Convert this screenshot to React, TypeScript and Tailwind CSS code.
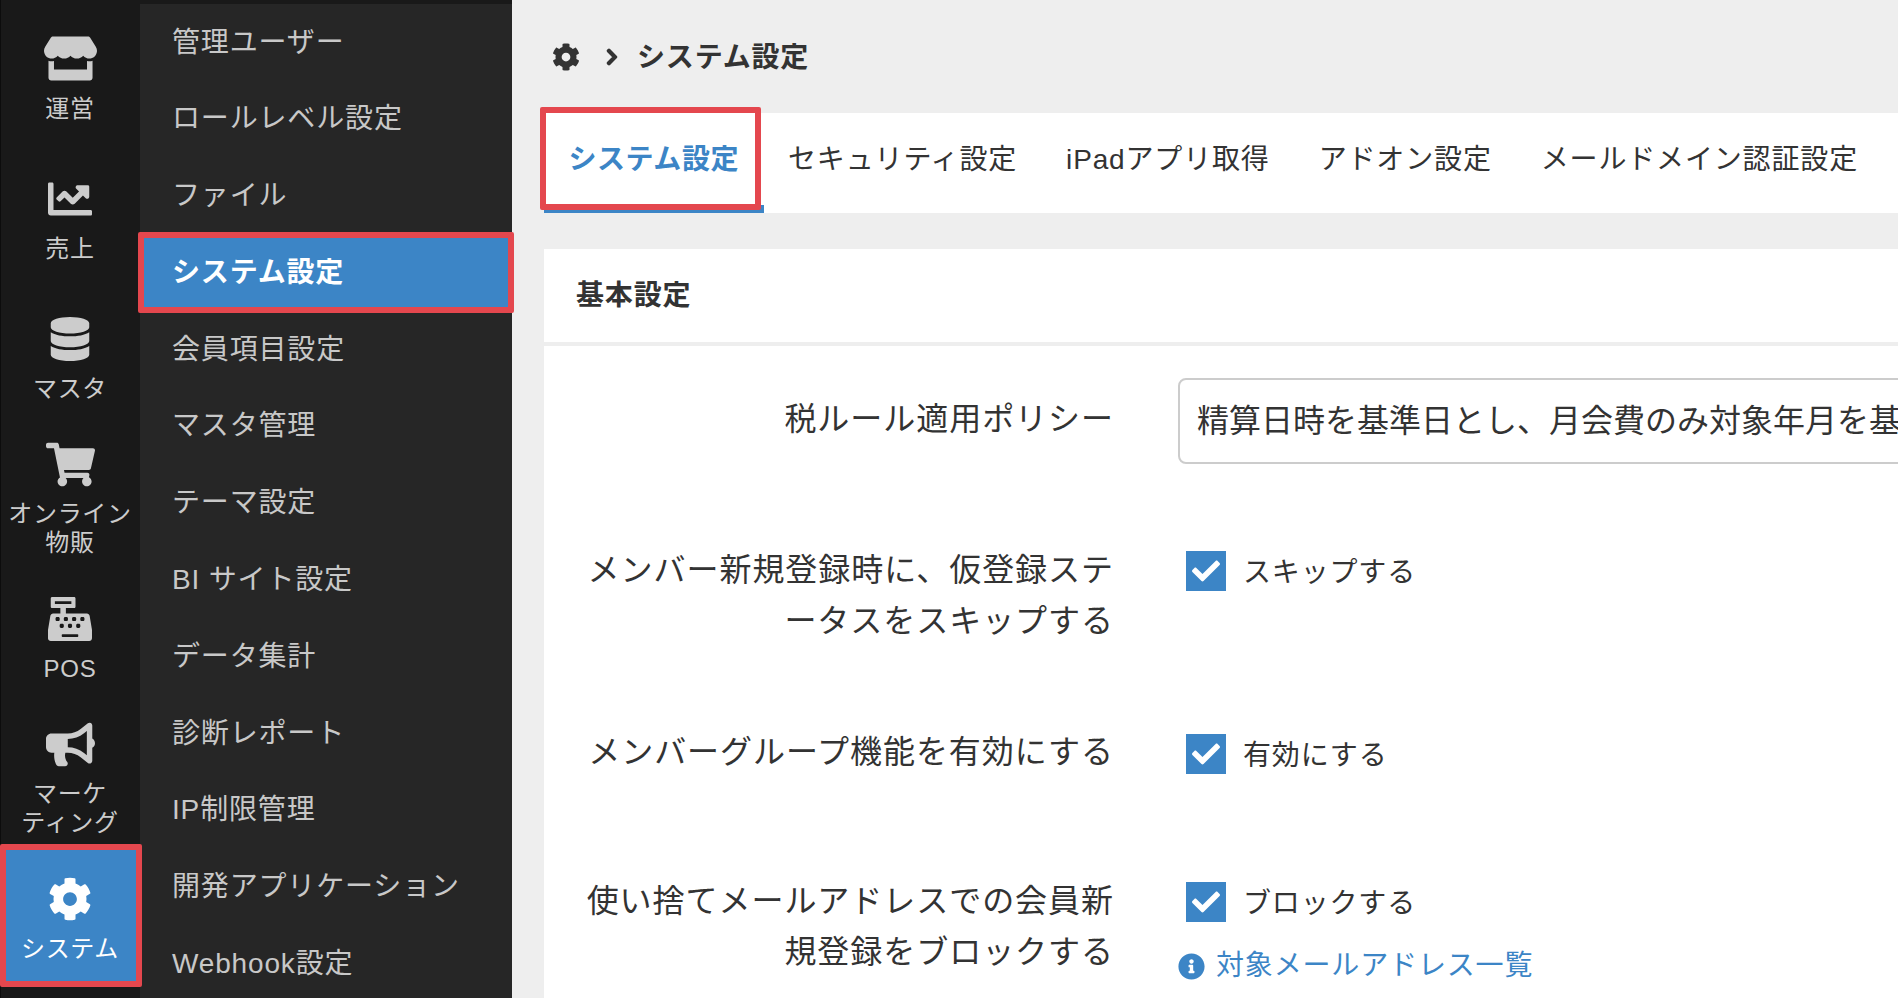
import type { ReactNode } from "react";
import {
  FaStore,
  FaChartLine,
  FaDatabase,
  FaShoppingCart,
  FaCashRegister,
  FaBullhorn,
  FaCog,
  FaCheck,
  FaInfoCircle,
  FaChevronRight,
} from "react-icons/fa";

const railItems = [
  { label: ["運営"], icon: <FaStore size={53} /> },
  { label: ["売上"], icon: <FaChartLine size={44} /> },
  { label: ["マスタ"], icon: <FaDatabase size={44} /> },
  { label: ["オンライン", "物販"], icon: <FaShoppingCart size={49} /> },
  { label: ["POS"], icon: <FaCashRegister size={44} /> },
  { label: ["マーケ", "ティング"], icon: <FaBullhorn size={49} /> },
  { label: ["システム"], icon: <FaCog size={44} />, active: true },
];

const subItems = [
  "管理ユーザー",
  "ロールレベル設定",
  "ファイル",
  "システム設定",
  "会員項目設定",
  "マスタ管理",
  "テーマ設定",
  "BI サイト設定",
  "データ集計",
  "診断レポート",
  "IP制限管理",
  "開発アプリケーション",
  "Webhook設定",
];

const tabs = ["システム設定", "セキュリティ設定", "iPadアプリ取得", "アドオン設定", "メールドメイン認証設定"];

const Checkbox = ({ label }: { label: string }) => (
  <div className="flex items-center h-10 ml-2">
    <span className="flex items-center justify-center w-10 h-10 bg-[#3c85c6] text-white">
      <FaCheck size={28} />
    </span>
    <span className="ml-[17px] pt-1 text-[28px] leading-10 tracking-[0.03em] text-[#333]">{label}</span>
  </div>
);

const FormRow = ({ label, children, className }: { label: ReactNode; children: ReactNode; className: string }) => (
  <div className={`flex ${className}`}>
    <div className="w-[538px] shrink-0 ml-8 pt-px text-right text-[32px] leading-[51px] tracking-[0.03em] text-[#333]">{label}</div>
    <div className="ml-16 shrink-0">{children}</div>
  </div>
);

export default function App() {
  return (
    <div className="flex h-screen w-full overflow-hidden bg-[#eeeeee] [font-family:'Liberation_Sans','Noto_Sans_CJK_JP',sans-serif]">
      {/* アイコンレール */}
      <nav className="w-[140px] shrink-0 pt-[9.5px] bg-[#191919] border-l border-[#0c0c0c]">
        {railItems.map((item) => (
          <div key={item.label[0]} className="relative flex flex-col items-center justify-center h-[140px] -ml-px">
            {item.active && (
              <div className="absolute left-0 top-[-5.5px] w-[142px] h-[143px] rounded-[2px] border-[6px] border-[#e4474e] bg-[#3c85c6]" />
            )}
            <div className={`relative flex items-center justify-center h-11 ${item.active ? "text-white" : "text-[#cccccc]"}`}>
              {item.icon}
            </div>
            <div className={`relative mt-[13px] text-center text-2xl leading-[29px] tracking-[0.03em] ${item.active ? "text-white" : "text-[#cccccc]"}`}>
              {item.label.map((line) => (
                <div key={line} className="whitespace-nowrap">
                  {line}
                </div>
              ))}
            </div>
          </div>
        ))}
      </nav>

      {/* サブメニュー */}
      <aside className="w-[372px] shrink-0 bg-[#262626] border-t-4 border-[#191919]">
        <div className="-mt-[2.4px]">
          {subItems.map((name) => {
            const active = name === "システム設定";
            return (
              <div
                key={name}
                className={`relative flex items-center h-[76.8px] pl-8 pt-[5px] text-[28px] tracking-[0.03em] ${
                  active ? "bg-[#3c85c6] font-bold text-white" : "text-[#c8c8c8]"
                }`}
              >
                {active && (
                  <div className="absolute left-[-2px] top-0 w-[376px] h-[81px] rounded-[2px] border-[6px] border-[#e4474e] z-10" />
                )}
                <span className="relative">{name}</span>
              </div>
            );
          })}
        </div>
      </aside>

      {/* メイン */}
      <main className="flex-1 min-w-0 overflow-hidden">
        <div className="flex items-center h-[113px] pl-10 text-[#333]">
          <FaCog size={28} />
          <FaChevronRight size={18} stroke="currentColor" strokeWidth={40} className="ml-[23px]" />
          <span className="ml-4 pt-[3px] text-[28px] font-bold tracking-[0.03em]">システム設定</span>
        </div>

        <div className="flex h-[100px] ml-8 bg-white">
          {tabs.map((tab, i) => (
            <div
              key={tab}
              className={`relative flex items-center h-full px-[24.5px] pb-[6px] text-[28px] ${
                i === 0
                  ? "font-bold tracking-[0.02em] text-[#3c85c6] border-b-8 border-[#3c85c6] box-border"
                  : "tracking-[0.03em] text-[#333]"
              }`}
            >
              {i === 0 && (
                <div className="absolute left-[-4px] top-[-6px] w-[221px] h-[103px] rounded-[2px] border-[6px] border-[#e4474e]" />
              )}
              <span className={i === 0 ? "mt-2" : ""}>{tab}</span>
            </div>
          ))}
        </div>

        <section className="ml-8 mt-9">
          <div className="flex items-center h-[93px] pl-8 bg-white text-[28px] font-bold tracking-[0.03em] text-[#333]">基本設定</div>
          <div className="mt-1 h-[700px] pt-8 bg-white">
            <FormRow
              className="mb-20"
              label={<div className="pt-[15px]">税ルール適用ポリシー</div>}
            >
              <div className="flex items-center w-[1000px] h-[86px] pl-[17px] rounded-lg border-2 border-[#cccccc] text-[32px] text-[#333] whitespace-nowrap">
                精算日時を基準日とし、月会費のみ対象年月を基準日とする
              </div>
            </FormRow>

            <FormRow
              className="mb-[79px]"
              label={
                <>
                  メンバー新規登録時に、仮登録ステ
                  <br />
                  ータスをスキップする
                </>
              }
            >
              <div className="pt-[7px]">
                <Checkbox label="スキップする" />
              </div>
            </FormRow>

            <FormRow className="mb-[97px]" label="メンバーグループ機能を有効にする">
              <div className="pt-2">
                <Checkbox label="有効にする" />
              </div>
            </FormRow>

            <FormRow
              className=""
              label={
                <>
                  使い捨てメールアドレスでの会員新
                  <br />
                  規登録をブロックする
                </>
              }
            >
              <div className="pt-[7px]">
                <Checkbox label="ブロックする" />
                <div className="flex items-center mt-[23px] text-[28px] leading-[42px] tracking-[0.03em] text-[#3c85c6]">
                  <FaInfoCircle size={27} />
                  <span className="ml-[11px]">対象メールアドレス一覧</span>
                </div>
              </div>
            </FormRow>
          </div>
        </section>
      </main>
    </div>
  );
}
